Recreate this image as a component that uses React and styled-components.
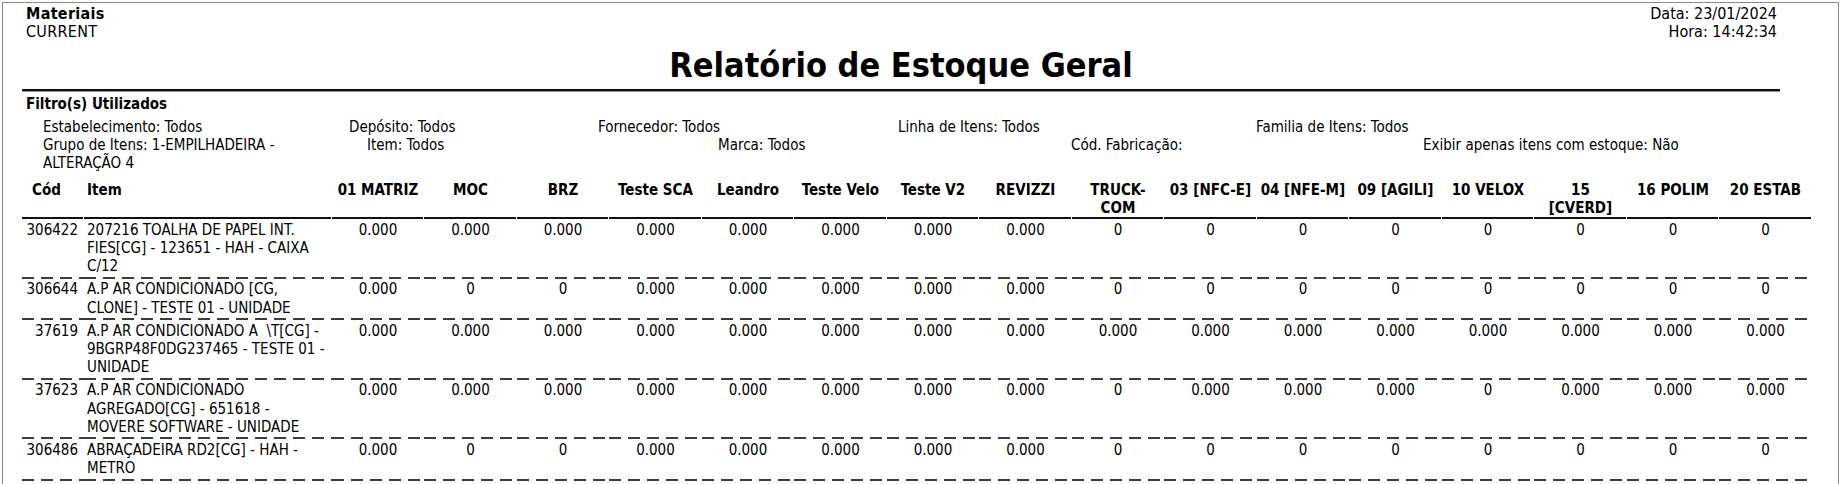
import React from "react";
import styled, { createGlobalStyle } from "styled-components";

const FONT = `"DejaVu Sans Condensed", "DejaVu Sans", "Liberation Sans", sans-serif`;

const GlobalStyle = createGlobalStyle`
  html, body {
    margin: 0;
    padding: 0;
    background: #fff;
  }
  body {
    font-family: ${FONT};
    font-stretch: condensed;
    font-size: 15px;
    color: #000;
    overflow: hidden;
  }
`;

const Sheet = styled.div`
  margin: 2px 2px 0 2px;
  height: 482px;
  box-sizing: border-box;
  border: 1px solid #8a8a8a;
  border-bottom: none;
  padding: 2px 0 0 19px;
`;

const TopBar = styled.div`
  width: 1758px;
  display: flex;
  justify-content: space-between;
  font-size: 16px;
  line-height: 17.7px;
`;

const Company = styled.div`
  padding-left: 4px;
  letter-spacing: 0.3px;
`;

const Strong = styled.div`
  font-weight: bold;
`;

const Stamp = styled.div`
  padding-right: 3px;
  text-align: right;
`;

const Title = styled.h1`
  width: 1758px;
  margin: 5px 0 0;
  padding-bottom: 4px;
  font-size: 34px;
  line-height: 40px;
  font-weight: bold;
  text-align: center;
  border-bottom: 2px solid #111;
  box-shadow: 0 1px 0 #8f8f8f;
`;

const Filters = styled.section`
  padding-left: 4px;
  line-height: 18.2px;
`;

const FiltersTitle = styled.div`
  margin-top: 4px;
  font-weight: bold;
`;

const FilterRow = styled.div`
  display: grid;
  grid-template-columns: ${(p) => p.$cols};
  padding-left: 17px;
  margin-top: ${(p) => p.$top || 0}px;
`;

const Wrapped = styled.div`
  width: 245px;
`;

const Table = styled.div`
  margin-top: 9px;
  width: 1790px;
`;

const Row = styled.div`
  display: grid;
  grid-template-columns: 62px 247.7px repeat(16, 92.5px);
  line-height: ${(p) => (p.$head ? "18px" : "18.2px")};
`;

const Cell = styled.div`
  text-align: ${(p) => p.$align || "center"};
  padding: ${(p) => (p.$head ? "0 0 2px" : "1.5px 0 3.5px")};
  padding-left: ${(p) => p.$pl || 0}px;
  padding-right: ${(p) => p.$pr || 0}px;
  font-weight: ${(p) => (p.$head ? "bold" : "normal")};
  white-space: pre;
  background-repeat: no-repeat;
  background-position: left bottom;
  background-size: ${(p) => (p.$head ? "calc(100% - 1px) 2px" : "100% 2px")};
  background-image: ${(p) =>
    p.$head
      ? "linear-gradient(#111, #111)"
      : "repeating-linear-gradient(90deg, #3c3c3c 0 12px, transparent 12px 19px)"};
`;

const heads = [
  ["01 MATRIZ"],
  ["MOC"],
  ["BRZ"],
  ["Teste SCA"],
  ["Leandro"],
  ["Teste Velo"],
  ["Teste V2"],
  ["REVIZZI"],
  ["TRUCK-", "COM"],
  ["03 [NFC-E]"],
  ["04 [NFE-M]"],
  ["09 [AGILI]"],
  ["10 VELOX"],
  ["15", "[CVERD]"],
  ["16 POLIM"],
  ["20 ESTAB"],
];

const Z = "0";
const D = "0.000";

const items = [
  {
    cod: "306422",
    lines: ["207216 TOALHA DE PAPEL INT.", "FIES[CG] - 123651 - HAH - CAIXA", "C/12"],
    qty: [D, D, D, D, D, D, D, D, Z, Z, Z, Z, Z, Z, Z, Z],
  },
  {
    cod: "306644",
    lines: ["A.P AR CONDICIONADO [CG,", "CLONE] - TESTE 01 - UNIDADE"],
    qty: [D, Z, Z, D, D, D, D, D, Z, Z, Z, Z, Z, Z, Z, Z],
  },
  {
    cod: "37619",
    lines: ["A.P AR CONDICIONADO A  \\T[CG] -", "9BGRP48F0DG237465 - TESTE 01 -", "UNIDADE"],
    qty: [D, D, D, D, D, D, D, D, D, D, D, D, D, D, D, D],
  },
  {
    cod: "37623",
    lines: ["A.P AR CONDICIONADO", "AGREGADO[CG] - 651618 -", "MOVERE SOFTWARE - UNIDADE"],
    qty: [D, D, D, D, D, D, D, D, Z, D, D, D, Z, D, D, D],
  },
  {
    cod: "306486",
    lines: ["ABRAÇADEIRA RD2[CG] - HAH -", "METRO"],
    qty: [D, Z, Z, D, D, D, D, D, Z, Z, Z, Z, Z, Z, Z, Z],
  },
];

function Lines({ list }) {
  return list.map((l, i) => <div key={i}>{l}</div>);
}

export default function App() {
  return (
    <>
      <GlobalStyle />
      <Sheet>
        <TopBar>
          <Company>
            <Strong>Materiais</Strong>
            <div>CURRENT</div>
          </Company>
          <Stamp>
            <div>Data: 23/01/2024</div>
            <div>Hora: 14:42:34</div>
          </Stamp>
        </TopBar>

        <Title>Relatório de Estoque Geral</Title>

        <Filters>
          <FiltersTitle>Filtro(s) Utilizados</FiltersTitle>
          <FilterRow $cols="306px 249px 300px 358px 1fr" $top={4}>
            <div>Estabelecimento: Todos</div>
            <div>Depósito: Todos</div>
            <div>Fornecedor: Todos</div>
            <div>Linha de Itens: Todos</div>
            <div>Familia de Itens: Todos</div>
          </FilterRow>
          <FilterRow $cols="324px 351px 353px 352px 1fr">
            <Wrapped>Grupo de Itens: 1-EMPILHADEIRA - ALTERAÇÃO 4</Wrapped>
            <div>Item: Todos</div>
            <div>Marca: Todos</div>
            <div>Cód. Fabricação:</div>
            <div>Exibir apenas itens com estoque: Não</div>
          </FilterRow>
        </Filters>

        <Table>
          <Row $head>
            <Cell $head $align="left" $pl={10}>Cód</Cell>
            <Cell $head $align="left" $pl={3}>Item</Cell>
            {heads.map((h, i) => (
              <Cell $head key={i}>
                <Lines list={h} />
              </Cell>
            ))}
          </Row>
          {items.map((it) => (
            <Row key={it.cod}>
              <Cell $align="right" $pr={6}>{it.cod}</Cell>
              <Cell $align="left" $pl={3}>
                <Lines list={it.lines} />
              </Cell>
              {it.qty.map((q, i) => (
                <Cell key={i}>{q}</Cell>
              ))}
            </Row>
          ))}
        </Table>
      </Sheet>
    </>
  );
}
